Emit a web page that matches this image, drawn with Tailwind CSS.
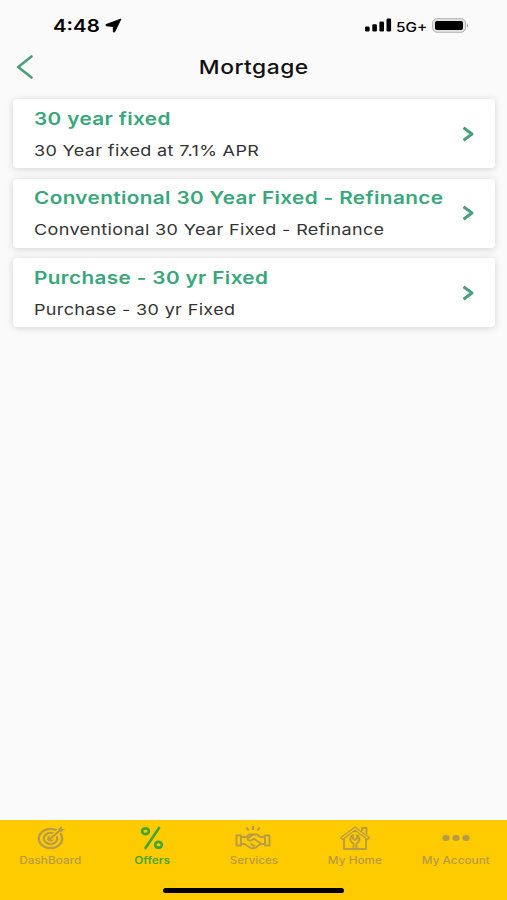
<!DOCTYPE html>
<html lang="en">
<head>
<meta charset="utf-8">
<title>Mortgage</title>
<script src="https://cdn.jsdelivr.net/npm/@tailwindcss/browser@4"></script>
</head>
<body class="bg-[#fafafa] font-['Inter',sans-serif]">
<div class="flex h-[900px] w-[507px] flex-col overflow-hidden whitespace-nowrap">
  <header class="h-[93px] shrink-0">
    <div class="flex h-[50px] items-center pt-[2px] pl-[53px] pr-[38px] text-black">
      <span class="w-[52px] shrink-0"><span class="inline-block origin-left scale-x-[1.2] text-[17px] leading-5 font-semibold">4:48</span></span>
      <svg class="mb-[2px] h-[15px] w-[17px]" viewBox="0 0 17 15"><path d="M16 1 1 6.600Q.3 7.500 1.400 7.800L8.300 8.500 8.300 13.800Q9 14.600 9.700 13.800Z" fill="#000" stroke="#000" stroke-width=".9" stroke-linejoin="round"/></svg>
      <svg class="mb-[2px] ml-auto h-[14px] w-[27px] shrink-0" viewBox="0 0 27 14"><rect x="0" y="8.500" width="4.600" height="5" rx="1.300"/><rect x="7.300" y="6.300" width="4.600" height="7.200" rx="1.300"/><rect x="14.400" y="3.500" width="4.600" height="10" rx="1.300"/><rect x="21.500" y=".5" width="4.600" height="13" rx="1.300"/></svg>
      <span class="ml-[4px] w-[36px] shrink-0"><span class="inline-block origin-left scale-x-[1.14] text-[13.500px] leading-5 font-medium">5G+</span></span>
      <svg class="mb-[2px] h-[15px] w-[37px] shrink-0" viewBox="0 0 37 15"><rect x=".6" y=".7" width="33" height="13.600" rx="4.500" fill="#e4e4e4" stroke="#b2b2b2"/><rect x="3" y="3" width="28" height="9" rx="2" fill="#000"/><path d="M35 5.500Q37 7.500 35 9.500Z" fill="#999"/></svg>
    </div>
    <div class="grid h-[34px] grid-cols-[60px_1fr_60px] items-center">
      <svg class="mb-px ml-4 h-6 w-[18px]" viewBox="0 0 18 24" fill="none" stroke="#4c9f7c" stroke-width="2.600" stroke-linecap="round" stroke-linejoin="round"><path d="M15.500 1.500 2.200 12 15.500 22.500"/></svg>
      <h1 class="pt-px text-center"><span class="inline-block scale-x-[1.2] text-[19px] leading-6 font-medium tracking-[0.4px] text-[#111]">Mortgage</span></h1>
    </div>
  </header>
  <main class="flex grow flex-col gap-[10.500px] pt-[6px] pl-[13px] pr-[12px]">
    <article class="flex h-[69px] items-center justify-between rounded-[4px] bg-white pr-[20px] pl-[21px] shadow-[0_1px_7px_rgba(0,0,0,0.16)]">
      <div class="pt-[5px]">
        <h2 class="h-[31px] leading-6"><span class="inline-block origin-left scale-x-[1.22] text-[17px] font-semibold tracking-[0.3px] text-[#38a77c]">30 year fixed</span></h2>
        <p class="h-[28px] leading-6"><span class="inline-block origin-left scale-x-[1.2] text-[15px] tracking-[0.3px] text-[#333]">30 Year fixed at 7.1% APR</span></p>
      </div>
      <svg class="h-4 w-[13px]" viewBox="0 0 13 16" fill="none" stroke="#4c9f7c" stroke-width="3" stroke-linejoin="round"><path d="M1.500 1.800 10 8 1.500 14.200"/></svg>
    </article>
    <article class="flex h-[69px] items-center justify-between rounded-[4px] bg-white pr-[20px] pl-[21px] shadow-[0_1px_7px_rgba(0,0,0,0.16)]">
      <div class="pt-[5px]">
        <h2 class="h-[31px] leading-6"><span class="inline-block origin-left scale-x-[1.22] text-[17px] font-semibold tracking-[0.3px] text-[#38a77c]">Conventional 30 Year Fixed - Refinance</span></h2>
        <p class="h-[28px] leading-6"><span class="inline-block origin-left scale-x-[1.2] text-[15px] tracking-[0.3px] text-[#333]">Conventional 30 Year Fixed - Refinance</span></p>
      </div>
      <svg class="h-4 w-[13px]" viewBox="0 0 13 16" fill="none" stroke="#4c9f7c" stroke-width="3" stroke-linejoin="round"><path d="M1.500 1.800 10 8 1.500 14.200"/></svg>
    </article>
    <article class="flex h-[69px] items-center justify-between rounded-[4px] bg-white pr-[20px] pl-[21px] shadow-[0_1px_7px_rgba(0,0,0,0.16)]">
      <div class="pt-[5px]">
        <h2 class="h-[31px] leading-6"><span class="inline-block origin-left scale-x-[1.22] text-[17px] font-semibold tracking-[0.3px] text-[#38a77c]">Purchase - 30 yr Fixed</span></h2>
        <p class="h-[28px] leading-6"><span class="inline-block origin-left scale-x-[1.2] text-[15px] tracking-[0.3px] text-[#333]">Purchase - 30 yr Fixed</span></p>
      </div>
      <svg class="h-4 w-[13px]" viewBox="0 0 13 16" fill="none" stroke="#4c9f7c" stroke-width="3" stroke-linejoin="round"><path d="M1.500 1.800 10 8 1.500 14.200"/></svg>
    </article>
  </main>
  <nav class="flex h-[80px] shrink-0 flex-col items-center bg-[#fecb00] text-[#b79b45]">
    <div class="grid h-[67.500px] w-full grid-cols-5 gap-0 pt-[5px]">
      <div class="flex flex-col items-center gap-px">
        <svg class="h-[26px] w-[28px]" viewBox="0 0 28 26" fill="none" stroke="currentColor" stroke-width="2.200"><ellipse cx="13.500" cy="13.500" rx="11.700" ry="9.700"/><ellipse cx="13.500" cy="13.500" rx="6.800" ry="5.600"/><ellipse cx="13.500" cy="13.500" rx="2.300" ry="1.900" fill="currentColor"/><path d="M13.500 13.500 23.500 5" stroke="#fecb00" stroke-width="4.500"/><path d="M13.500 13.500 24 4.500"/><path d="M21.500 6.500V3.500L25 1.500V4H28L24.500 7Z" fill="currentColor" stroke="none"/></svg>
        <span class="scale-x-[1.18] text-[10px] leading-4 font-medium">DashBoard</span>
      </div>
      <div class="flex flex-col items-center gap-px text-[#47a536]">
        <svg class="h-[26px] w-[28px]" viewBox="0 0 28 26" fill="none" stroke="currentColor" stroke-width="2.700" stroke-linecap="round"><path d="M21 3 7.500 23"/><ellipse cx="7.500" cy="6.200" rx="3.400" ry="2.900"/><ellipse cx="20.500" cy="19.800" rx="3.400" ry="2.900"/></svg>
        <span class="scale-x-[1.18] text-[10px] leading-4 font-semibold">Offers</span>
      </div>
      <div class="flex flex-col items-center gap-px">
        <svg class="h-[26px] w-[36px]" viewBox="0 0 36 26" fill="none" stroke="currentColor" stroke-width="1.900" stroke-linejoin="round"><path d="M11.500 2.500 13.500 5.500M18 1V5M24.500 2.500 22.500 5.500" stroke-width="2.200"/><path d="M1.500 10.500H6V20.500H1.500ZM30 10.500H34.500V20.500H30Z"/><path d="M6 12H11L14 9.500H22L25.500 12H30M6 19H9.500L15 22.500Q18 24 21 22.500L25.500 19H30"/><path d="M18 9.500 12.500 13.500Q12.500 16 16 15.500L19 13.800 26 18.500M15.500 18.500 20 21.500"/></svg>
        <span class="scale-x-[1.16] text-[10px] leading-4 font-medium">Services</span>
      </div>
      <div class="flex flex-col items-center gap-px">
        <svg class="h-[26px] w-[32px]" viewBox="0 0 32 26" fill="none" stroke="currentColor" stroke-width="1.800" stroke-linejoin="round"><path d="M5 13.500V24H27V13.500"/><path d="M1.500 12.800 16 2 30.500 12.800 28.500 14.500 16 5.300 3.500 14.500Z" stroke-width="1.300"/><path d="M23 6V3H27.500V9.500"/><path d="M14.500 24V18.500Q11 17 11.500 13.500 12 11 14 10V13.500L16 15 18 13.500V10Q20.500 11.500 20.500 14 20.500 17 17.500 18.500V24"/></svg>
        <span class="scale-x-[1.18] text-[10px] leading-4 font-medium">My Home</span>
      </div>
      <div class="flex flex-col items-center gap-px">
        <svg class="h-[26px] w-[28px]" viewBox="0 0 28 26" fill="currentColor"><ellipse cx="4" cy="13" rx="3.600" ry="3"/><ellipse cx="14" cy="13" rx="3.600" ry="3"/><ellipse cx="24" cy="13" rx="3.600" ry="3"/></svg>
        <span class="scale-x-[1.18] text-[10px] leading-4 font-medium">My Account</span>
      </div>
    </div>
    <div class="h-[5px] w-[181px] rounded-full bg-black"></div>
  </nav>
</div>
</body>
</html>
